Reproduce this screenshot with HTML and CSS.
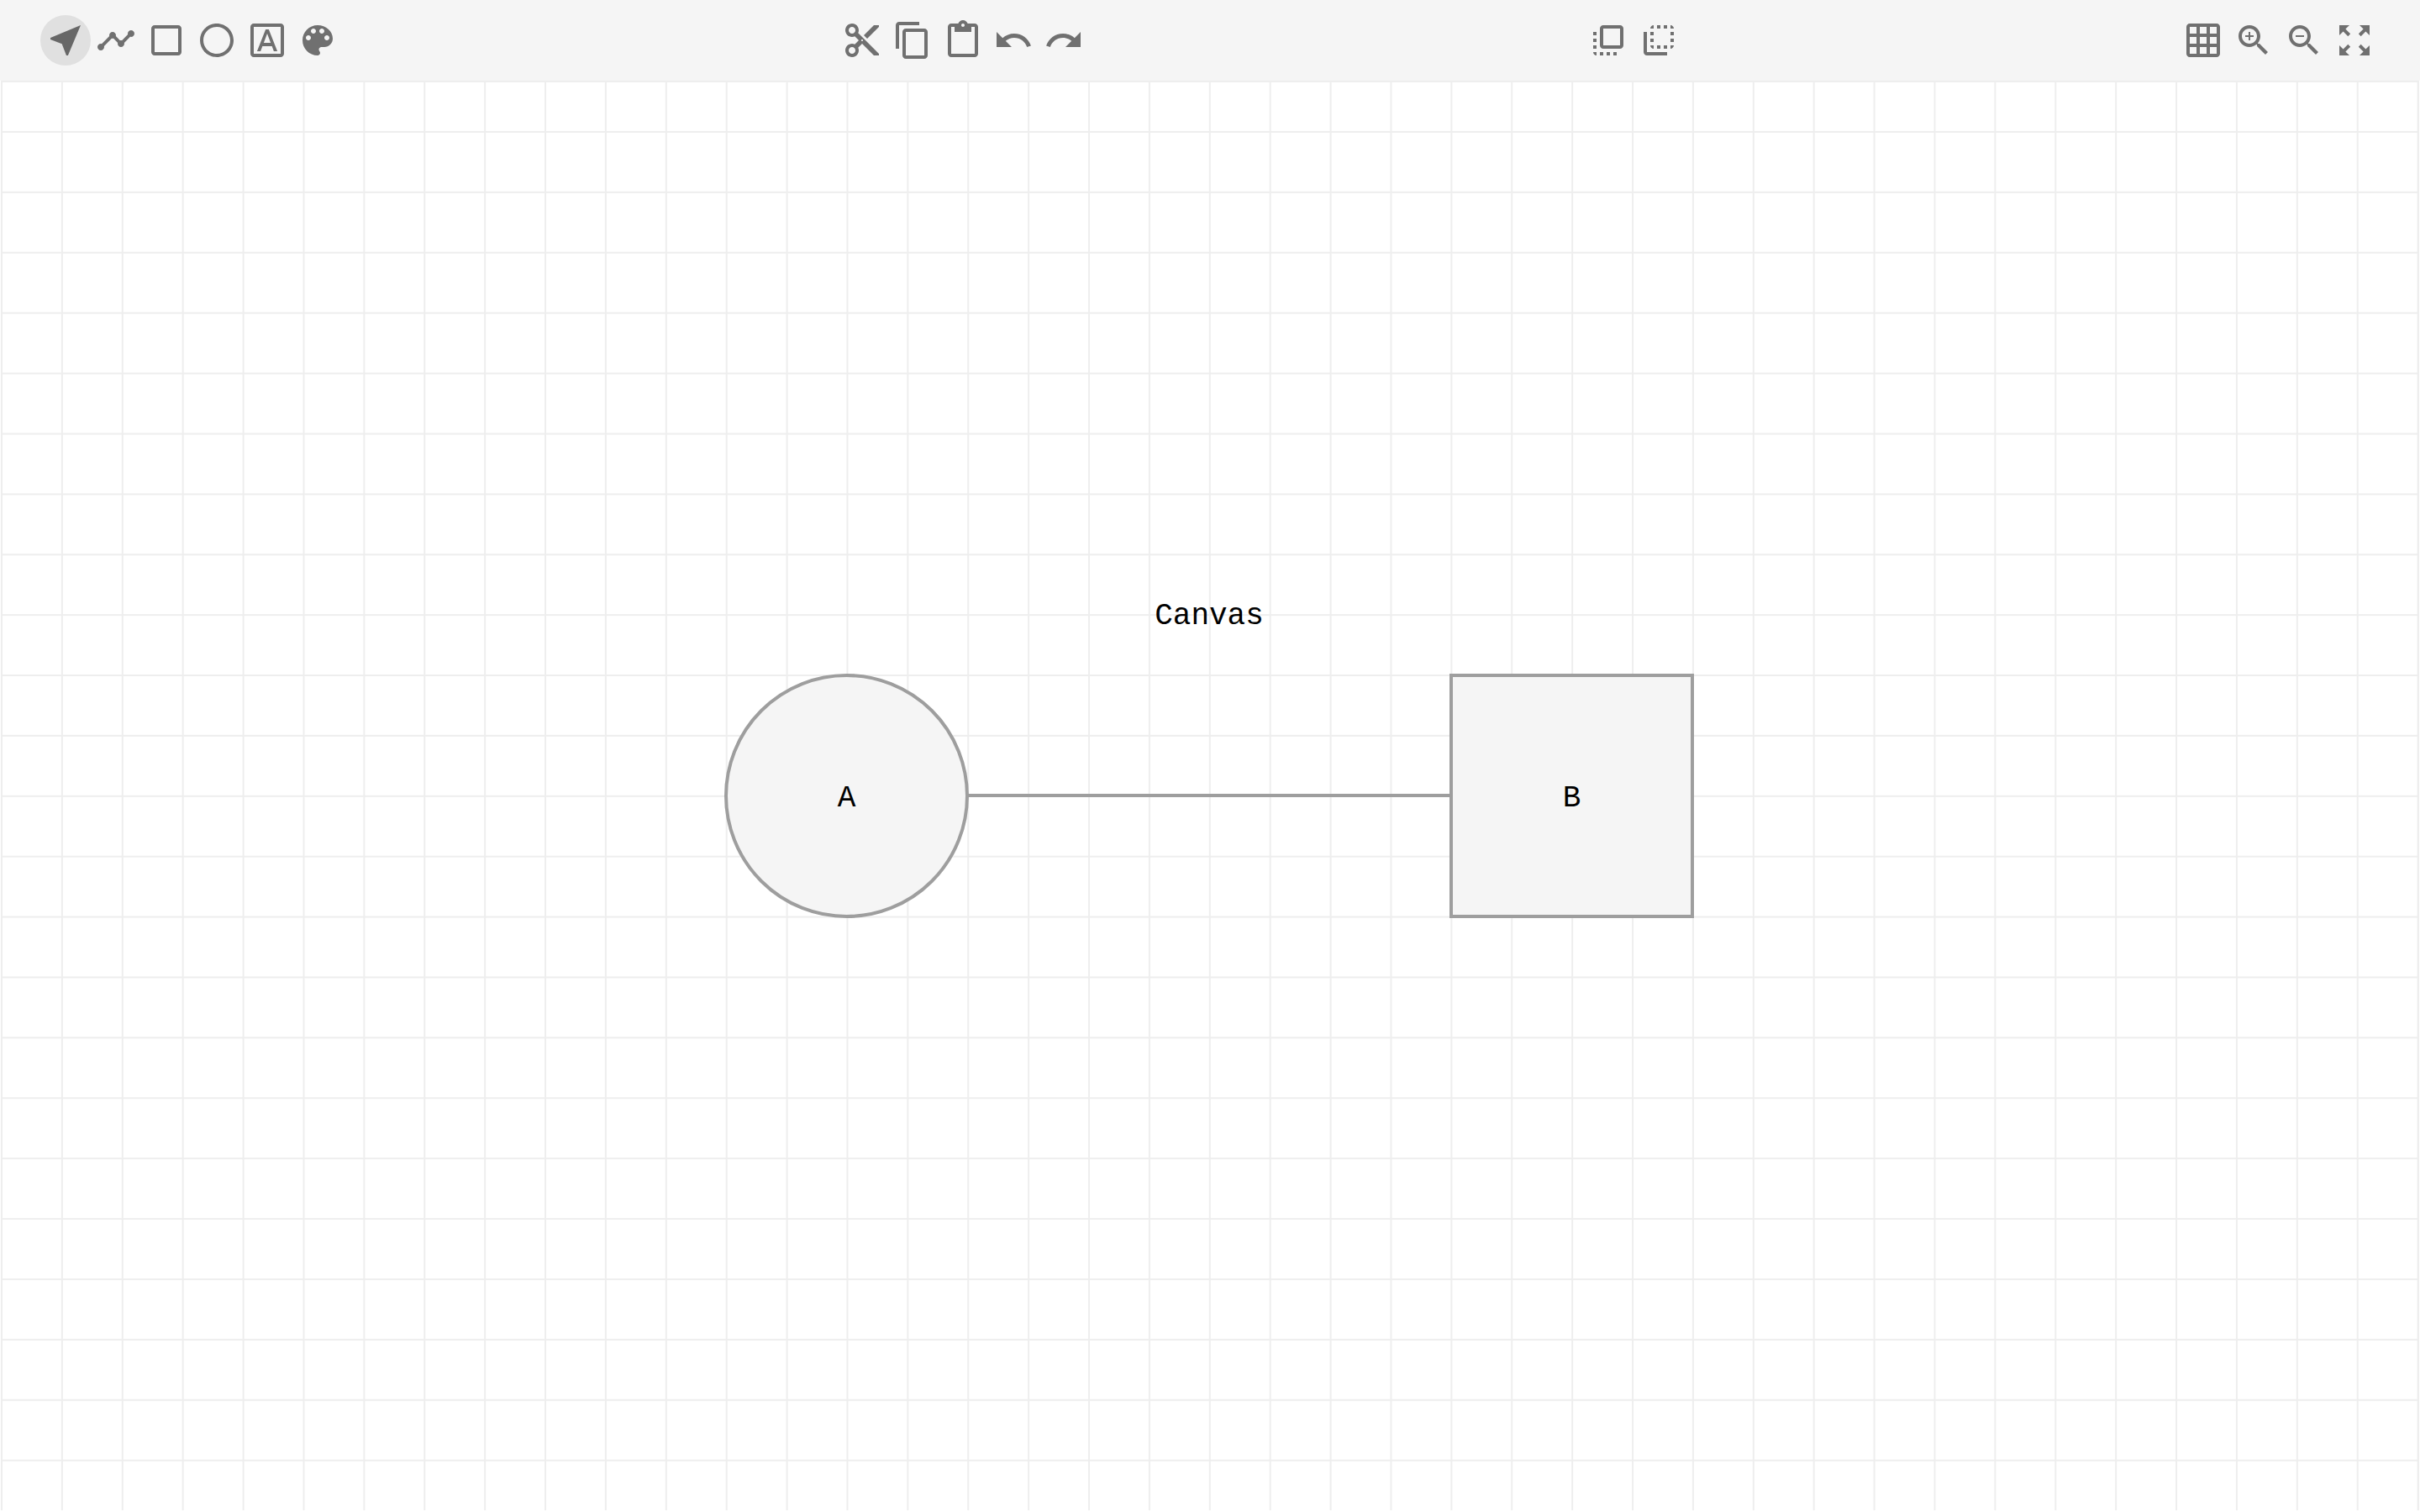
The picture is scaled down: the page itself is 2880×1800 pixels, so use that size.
FILE: index.html
```html
<!DOCTYPE html>
<html lang="en">
<head>
<meta charset="utf-8">
<meta name="viewport" content="width=device-width, initial-scale=1">
<title>Canvas</title>
<link rel="stylesheet" href="styles.css">
</head>
<body>
<div class="editor">
  <header class="toolbar">
    <div class="group">
      <button class="tool tool-active" type="button" aria-label="Select" aria-pressed="true"><svg class="icon" viewBox="0 0 24 24"><path d="M21 3L3 10.53v.98l6.84 2.65L12.48 21h.98L21 3z"/></svg></button>
      <button class="tool" type="button" aria-label="Path"><svg class="icon" viewBox="0 0 24 24"><path d="M23 8c0 1.1-.9 2-2 2-.18 0-.35-.02-.51-.07l-3.56 3.55c.05.16.07.34.07.52 0 1.1-.9 2-2 2s-2-.9-2-2c0-.18.02-.36.07-.52l-2.55-2.55c-.16.05-.34.07-.52.07s-.36-.02-.52-.07l-4.55 4.56c.05.16.07.33.07.51 0 1.1-.9 2-2 2s-2-.9-2-2 .9-2 2-2c.18 0 .35.02.51.07l4.56-4.55C8.02 9.36 8 9.18 8 9c0-1.1.9-2 2-2s2 .9 2 2c0 .18-.02.36-.07.52l2.55 2.55c.16-.05.34-.07.52-.07s.36.02.52.07l3.55-3.56C19.02 8.35 19 8.18 19 8c0-1.1.9-2 2-2s2 .9 2 2z"/></svg></button>
      <button class="tool" type="button" aria-label="Rectangle"><svg class="icon" viewBox="0 0 24 24"><path d="M19 3H5c-1.1 0-2 .9-2 2v14c0 1.1.9 2 2 2h14c1.1 0 2-.9 2-2V5c0-1.1-.9-2-2-2zm0 16H5V5h14v14z"/></svg></button>
      <button class="tool" type="button" aria-label="Ellipse"><svg class="icon" viewBox="0 0 24 24"><path d="M12 2C6.48 2 2 6.48 2 12s4.48 10 10 10 10-4.48 10-10S17.52 2 12 2zm0 18c-4.42 0-8-3.58-8-8s3.58-8 8-8 8 3.58 8 8-3.58 8-8 8z"/></svg></button>
      <button class="tool" type="button" aria-label="Text"><svg class="icon" viewBox="0 0 24 24"><path d="M9.17 15.5h5.64l1.14 3h2.09l-5.11-13h-1.86l-5.11 13h2.09l1.12-3zM12 7.98l2.07 5.52H9.93L12 7.98zM20 2H4c-1.1 0-2 .9-2 2v16c0 1.1.9 2 2 2h16c1.1 0 2-.9 2-2V4c0-1.1-.9-2-2-2zm0 18H4V4h16v16z"/></svg></button>
      <button class="tool" type="button" aria-label="Colors"><svg class="icon" viewBox="0 0 24 24"><path d="M12 3c-4.97 0-9 4.03-9 9s4.03 9 9 9c.83 0 1.5-.67 1.5-1.5 0-.39-.15-.74-.39-1.01-.23-.26-.38-.61-.38-.99 0-.83.67-1.5 1.5-1.5H16c2.76 0 5-2.24 5-5 0-4.42-4.03-8-9-8zm-5.5 9c-.83 0-1.5-.67-1.5-1.5S5.67 9 6.5 9 8 9.67 8 10.5 7.33 12 6.5 12zm3-4C8.67 8 8 7.33 8 6.5S8.67 5 9.5 5s1.5.67 1.5 1.5S10.33 8 9.5 8zm5 0c-.83 0-1.5-.67-1.5-1.5S13.67 5 14.5 5s1.5.67 1.5 1.5S15.33 8 14.5 8zm3 4c-.83 0-1.5-.67-1.5-1.5S16.67 9 17.5 9s1.5.67 1.5 1.5-.67 1.5-1.5 1.5z"/></svg></button>
    </div>
    <div class="group">
      <button class="tool" type="button" aria-label="Cut"><svg class="icon" viewBox="0 0 24 24"><path d="M9.64 7.64c.23-.5.36-1.05.36-1.64 0-2.21-1.79-4-4-4S2 3.79 2 6s1.79 4 4 4c.59 0 1.14-.13 1.64-.36L10 12l-2.36 2.36C7.14 14.13 6.59 14 6 14c-2.21 0-4 1.79-4 4s1.79 4 4 4 4-1.79 4-4c0-.59-.13-1.14-.36-1.64L12 14l7 7h3v-1L9.64 7.64zM6 8c-1.1 0-2-.89-2-2s.9-2 2-2 2 .89 2 2-.9 2-2 2zm0 12c-1.1 0-2-.89-2-2s.9-2 2-2 2 .89 2 2-.9 2-2 2zm6-7.5c-.28 0-.5-.22-.5-.5s.22-.5.5-.5.5.22.5.5-.22.5-.5.5zM19 3l-6 6 2 2 7-7V3z"/></svg></button>
      <button class="tool" type="button" aria-label="Copy"><svg class="icon" viewBox="0 0 24 24"><path d="M16 1H4c-1.1 0-2 .9-2 2v14h2V3h12V1zm3 4H8c-1.1 0-2 .9-2 2v14c0 1.1.9 2 2 2h11c1.1 0 2-.9 2-2V7c0-1.1-.9-2-2-2zm0 16H8V7h11v14z"/></svg></button>
      <button class="tool" type="button" aria-label="Paste"><svg class="icon" viewBox="0 0 24 24"><path d="M19 2h-4.18C14.4.84 13.3 0 12 0c-1.3 0-2.4.84-2.82 2H5c-1.1 0-2 .9-2 2v16c0 1.1.9 2 2 2h14c1.1 0 2-.9 2-2V4c0-1.1-.9-2-2-2zm-7 0c.55 0 1 .45 1 1s-.45 1-1 1-1-.45-1-1 .45-1 1-1zm7 18H5V4h2v3h10V4h2v16z"/></svg></button>
      <button class="tool" type="button" aria-label="Undo"><svg class="icon" viewBox="0 0 24 24"><path d="M12.5 8c-2.65 0-5.05.99-6.9 2.6L2 7v9h9l-3.62-3.62c1.39-1.16 3.16-1.88 5.12-1.88 3.54 0 6.55 2.31 7.6 5.5l2.37-.78C21.08 11.03 17.15 8 12.5 8z"/></svg></button>
      <button class="tool" type="button" aria-label="Redo"><svg class="icon" viewBox="0 0 24 24"><path d="M18.4 10.6C16.55 8.99 14.15 8 11.5 8c-4.65 0-8.58 3.03-9.96 7.22L3.9 16c1.05-3.19 4.05-5.5 7.6-5.5 1.95 0 3.73.72 5.12 1.88L13 16h9V7l-3.6 3.6z"/></svg></button>
    </div>
    <div class="group">
      <button class="tool" type="button" aria-label="Bring to front"><svg class="icon" viewBox="0 0 24 24"><path d="M3 13h2v-2H3v2zm0 4h2v-2H3v2zm2 4v-2H3c0 1.1.89 2 2 2zM3 9h2V7H3v2zm12 12h2v-2h-2v2zm4-18H9c-1.11 0-2 .9-2 2v10c0 1.1.89 2 2 2h10c1.1 0 2-.9 2-2V5c0-1.1-.9-2-2-2zm0 12H9V5h10v10zm-8 6h2v-2h-2v2zm-4 0h2v-2H7v2z"/></svg></button>
      <button class="tool" type="button" aria-label="Send to back"><svg class="icon" viewBox="0 0 24 24"><path d="M9 7H7v2h2V7zm0 4H7v2h2v-2zm0-8c-1.11 0-2 .9-2 2h2V3zm4 12h-2v2h2v-2zm6-12v2h2c0-1.1-.9-2-2-2zm-6 0h-2v2h2V3zM9 17v-2H7c0 1.1.89 2 2 2zm10-4h2v-2h-2v2zm0-4h2V7h-2v2zm0 8c1.1 0 2-.9 2-2h-2v2zM5 7H3v12c0 1.1.89 2 2 2h12v-2H5V7zm10-2h2V3h-2v2zm0 12h2v-2h-2v2z"/></svg></button>
    </div>
    <div class="group">
      <button class="tool" type="button" aria-label="Toggle grid"><svg class="icon" viewBox="0 0 24 24"><path d="M20 2H4c-1.1 0-2 .9-2 2v16c0 1.1.9 2 2 2h16c1.1 0 2-.9 2-2V4c0-1.1-.9-2-2-2zM8 20H4v-4h4v4zm0-6H4v-4h4v4zm0-6H4V4h4v4zm6 12h-4v-4h4v4zm0-6h-4v-4h4v4zm0-6h-4V4h4v4zm6 12h-4v-4h4v4zm0-6h-4v-4h4v4zm0-6h-4V4h4v4z"/></svg></button>
      <button class="tool" type="button" aria-label="Zoom in"><svg class="icon" viewBox="0 0 24 24"><path d="M15.5 14h-.79l-.28-.27C15.41 12.59 16 11.11 16 9.5 16 5.91 13.09 3 9.5 3S3 5.91 3 9.5 5.91 16 9.5 16c1.61 0 3.09-.59 4.23-1.57l.27.28v.79l5 4.99L20.49 19l-4.99-5zm-6 0C7.01 14 5 11.99 5 9.5S7.01 5 9.5 5 14 7.01 14 9.5 11.99 14 9.5 14z"/><path d="M12 10h-2v2H9v-2H7V9h2V7h1v2h2v1z"/></svg></button>
      <button class="tool" type="button" aria-label="Zoom out"><svg class="icon" viewBox="0 0 24 24"><path d="M15.5 14h-.79l-.28-.27C15.41 12.59 16 11.11 16 9.5 16 5.91 13.09 3 9.5 3S3 5.91 3 9.5 5.91 16 9.5 16c1.61 0 3.09-.59 4.23-1.57l.27.28v.79l5 4.99L20.49 19l-4.99-5zm-6 0C7.01 14 5 11.99 5 9.5S7.01 5 9.5 5 14 7.01 14 9.5 11.99 14 9.5 14z"/><path d="M7 9h5v1H7z"/></svg></button>
      <button class="tool" type="button" aria-label="Fit to screen"><svg class="icon" viewBox="0 0 24 24"><path d="M15 3l2.3 2.3-2.89 2.87 1.42 1.42L18.7 6.7 21 9V3h-6zM3 9l2.3-2.3 2.87 2.89 1.42-1.42L6.7 5.3 9 3H3v6zm6 12l-2.3-2.3 2.89-2.87-1.42-1.42L5.3 17.3 3 15v6h6zm12-6l-2.3 2.3-2.87-2.89-1.42 1.42 2.89 2.87L15 21h6v-6z"/></svg></button>
    </div>
  </header>
  <main class="canvas">
    <div class="diagram">
      <div class="caption">Canvas</div>
      <div class="edge"></div>
      <div class="node node-circle">A</div>
      <div class="node node-square">B</div>
    </div>
  </main>
</div>
</body>
</html>
```
FILE: styles.css
```css
* {
  box-sizing: border-box;
}

body {
  margin: 0;
  background: #fff;
}

.editor {
  display: flex;
  flex-direction: column;
  min-height: 100vh;
}

.toolbar {
  display: flex;
  justify-content: space-between;
  padding: 18px 48px;
  background: #f5f5f5;
}

.group {
  display: flex;
}

.tool {
  display: flex;
  width: 60px;
  height: 60px;
  padding: 6px;
  border: 0;
  border-radius: 50%;
  background: none;
  color: rgba(0, 0, 0, 0.54);
  cursor: pointer;
}

.tool-active {
  background: #e0e0e0;
}

.icon {
  width: 48px;
  height: 48px;
  fill: currentColor;
}

/* Forty square cells span the canvas; the first column's line is its left edge. */
.canvas {
  --cell: calc((100vw - 4px) / 40);
  flex: 1;
  position: relative;
  margin: 0 1px 2px;
  border-top: 2px solid #eee;
  border-right: 2px solid #eee;
  background-color: #fff;
  background-image:
    linear-gradient(to right, #eee 2px, transparent 2px),
    linear-gradient(to bottom, #eee 2px, transparent 2px);
  background-size: var(--cell) var(--cell);
  background-position: 0 0, 0 58px;
  overflow: hidden;
}

/* Free canvas: items are placed relative to the diagram's own box. */
.diagram {
  position: absolute;
  top: 50%;
  left: 50%;
  width: 1154px;
  height: 379px;
  margin: -234px 0 0 -577px;
  font-family: "Courier", "Courier New", "Liberation Mono", monospace;
  font-size: 36px;
  line-height: 40px;
  color: #000;
}

.caption {
  position: absolute;
  top: 0;
  left: 0;
  width: 100%;
  text-align: center;
}

.node {
  position: absolute;
  bottom: 0;
  display: flex;
  align-items: center;
  justify-content: center;
  width: 291px;
  height: 291px;
  padding-top: 6px;
  border: 4px solid #9e9e9e;
  background: #f5f5f5;
}

.node-circle {
  left: 0;
  border-radius: 50%;
}

.node-square {
  right: 0;
}

.edge {
  position: absolute;
  left: 290px;
  right: 290px;
  bottom: 144px;
  height: 4px;
  background: #9e9e9e;
}
```
